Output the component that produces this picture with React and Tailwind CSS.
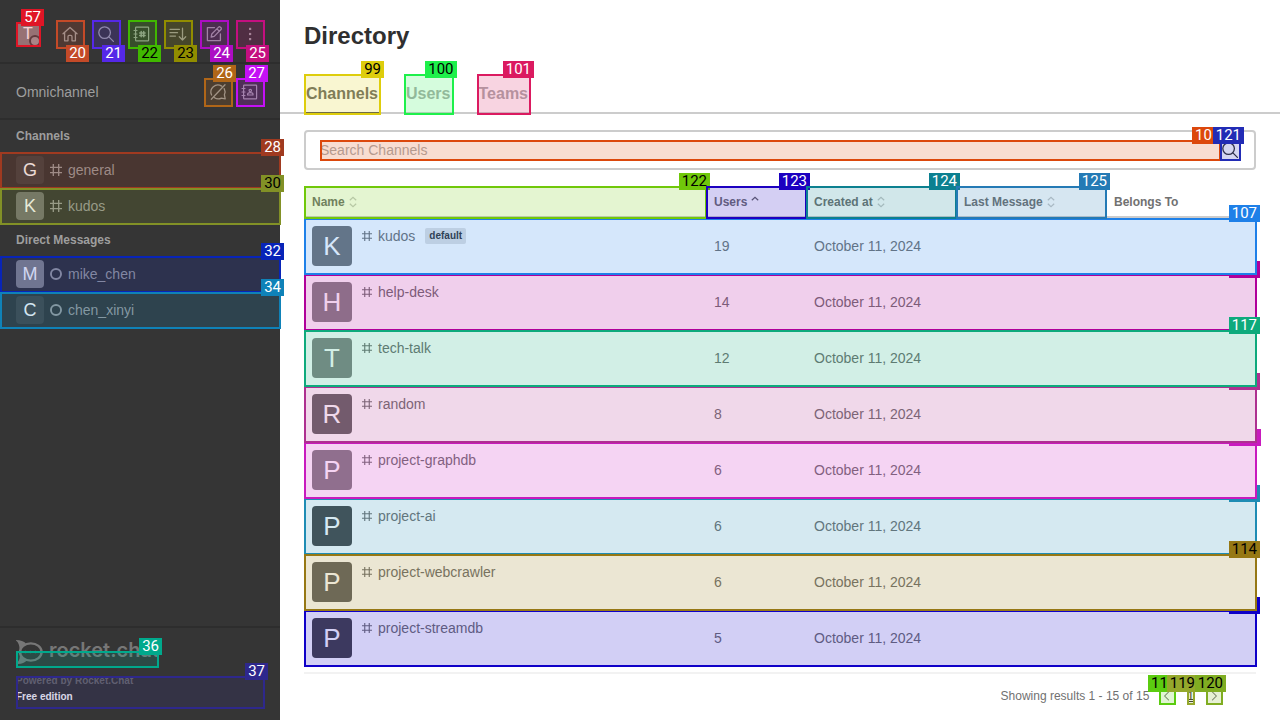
import React from 'react';

/* Numbered highlight laid over its (relative) parent. The colour comes from the text colour. */
function Mark({ n, color, dark, below, box = 'left-0 top-0 -right-px -bottom-px', z = 'z-10', label = '' }) {
  return (
    <span className={`pointer-events-none absolute border-2 border-current bg-current/19 ${box} ${z} ${color}`}>
      <span
        className={`absolute block h-[17px] whitespace-nowrap bg-current px-[3px] font-[Roboto,sans-serif] text-[15px] leading-[17px] font-normal ${
          below ? '-right-1.5 top-[23px]' : '-right-[5px] bottom-full -mb-0.5'
        } ${label}`}
      >
        <span className={dark ? 'text-black' : 'text-white'}>{n}</span>
      </span>
    </span>
  );
}

function Svg({ children, className = 'size-5', w = 1.3 }) {
  return (
    <svg viewBox="0 0 20 20" className={`shrink-0 ${className}`} fill="none" stroke="currentColor" strokeWidth={w} strokeLinecap="round" strokeLinejoin="round" aria-hidden="true">
      {children}
    </svg>
  );
}

const Home = () => (
  <Svg>
    <path d="M3 9.8 10 3.4l7 6.4M4.6 8.8v8H8v-4.3a1.2 1.2 0 0 1 1.2-1.2h1.6a1.2 1.2 0 0 1 1.2 1.2v4.3h3.4v-8" />
  </Svg>
);
const Search = () => (
  <Svg>
    <circle cx="8.6" cy="8.6" r="5.8" />
    <path d="m12.9 12.9 4.5 4.5" />
  </Svg>
);
const Directory = () => (
  <Svg w={1.2}>
    <rect x="3.6" y="3.2" width="13" height="13.6" rx="0.6" />
    <path d="M2 6.5h3M2 10h3M2 13.5h3" />
    <path strokeWidth="1.5" d="M9.2 7.4v5.4M11.7 7.4v5.4M7.7 8.9h5.4M7.7 11.4h5.4" />
  </Svg>
);
const Sort = () => (
  <Svg>
    <path d="M2 5.3h9.500M2 8.700h7.500M2 12.100h5.500M14.500 4.200V16M11.300 12.800l3.200 3.300 3.200-3.300" />
  </Svg>
);
const Edit = () => (
  <Svg>
    <path d="M10.5 3.6H3.4v13h13V9.8" />
    <path d="m7.2 13 .6-3 6.8-6.9a1.2 1.2 0 0 1 1.7 0l.7.7a1.2 1.2 0 0 1 0 1.7l-6.8 6.9zM13 4.9l2.3 2.3" />
  </Svg>
);
const Kebab = () => (
  <Svg>
    <g fill="currentColor" stroke="none">
      <rect x="9" y="3.8" width="2.2" height="2.2" />
      <rect x="9" y="8.9" width="2.2" height="2.2" />
      <rect x="9" y="14" width="2.2" height="2.2" />
    </g>
  </Svg>
);
const ChatOff = () => (
  <Svg>
    <path d="M13.7 4.1A7 7 0 0 0 3.6 13M16.2 6.6a7 7 0 0 1 .2 6.2l.8 4-3.8-.7a7 7 0 0 1-6.9-.4M17 2.8 3.3 17.2" />
  </Svg>
);
const Contacts = () => (
  <Svg w={1.2}>
    <rect x="3.6" y="3.2" width="13" height="13.6" rx="0.6" />
    <path d="M2 6.5h3M2 10h3M2 13.5h3M7.6 13H13v-.8c0-1-1-1.6-2.7-1.6s-2.7.6-2.7 1.6z" />
    <circle cx="10.3" cy="8.6" r="1.2" />
  </Svg>
);
const Hash = ({ className }) => (
  <Svg className={className} w={2.2}>
    <path d="M5.500 0v20M14.500 0v20M0 5.500h20M0 14.500h20" strokeLinecap="butt" />
  </Svg>
);
const Ring = ({ className }) => (
  <Svg className={className} w={3.2}>
    <circle cx="10" cy="10" r="8.4" />
  </Svg>
);
const SortMark = ({ up = 'text-[#c8c8c8]', down = 'text-[#c8c8c8]' }) => (
  <svg viewBox="0 0 16 16" className="size-4" fill="none" stroke="currentColor" strokeWidth="1.200" aria-hidden="true">
    <path className={up} d="m4.800 6.200 3.200-3 3.200 3" />
    <path className={down} d="m4.800 9.800 3.200 3 3.200-3" />
  </svg>
);

const nav = [
  { n: 20, label: 'Home', icon: <Home />, color: 'text-[#c44a28]' },
  { n: 21, label: 'Search', icon: <Search />, color: 'text-[#5528e8]' },
  { n: 22, label: 'Directory', icon: <Directory />, color: 'text-[#40b800]', dark: true },
  { n: 23, label: 'Display', icon: <Sort />, color: 'text-[#918d00]', dark: true },
  { n: 24, label: 'Create new', icon: <Edit />, color: 'text-[#ad0dc4]' },
  { n: 25, label: 'More', icon: <Kebab />, color: 'text-[#c40f80]' },
];

const rooms = [
  {
    title: 'Channels',
    items: [
      { n: 28, name: 'general', bg: 'bg-[#434343]', color: 'text-[#a03a20]' },
      { n: 30, name: 'kudos', bg: 'bg-[#747474]', color: 'text-[#829126]', dark: true },
    ],
  },
  {
    title: 'Direct Messages',
    direct: true,
    items: [
      { n: 32, name: 'mike_chen', bg: 'bg-[#888888]', color: 'text-[#0824b8]' },
      { n: 34, name: 'chen_xinyi', bg: 'bg-[#454545]', color: 'text-[#0f82b8]' },
    ],
  },
];

const tabs = [
  { n: 99, name: 'Channels', active: true, color: 'text-[#decd0c]', dark: true },
  { n: 100, name: 'Users', color: 'text-[#1ef04b]', dark: true },
  { n: 101, name: 'Teams', color: 'text-[#db1a60]' },
];

const columns = [
  { n: 122, name: 'Name', color: 'text-[#70c80a]', dark: true, width: '' },
  { n: 123, name: 'Users', color: 'text-[#1c00c0]', width: 'w-[100px]', up: 'text-[#666666]' },
  { n: 124, name: 'Created at', color: 'text-[#0c8090]', width: 'w-[150px]' },
  { n: 125, name: 'Last Message', color: 'text-[#247ab5]', width: 'w-[150px]' },
];

const channels = [
  { n: 107, name: 'kudos', tag: 'default', users: 19, bg: 'bg-[#737373]', color: 'text-[#1e80e8]', z: 'z-7' },
  { name: 'help-desk', users: 14, bg: 'bg-[#868686]', color: 'text-[#b0009a]', z: 'z-5' },
  { n: 117, name: 'tech-talk', users: 12, bg: 'bg-[#868686]', color: 'text-[#0eaa7c]', z: 'z-6' },
  { name: 'random', users: 8, bg: 'bg-[#666666]', color: 'text-[#ae3090]', z: 'z-4' },
  { name: 'project-graphdb', users: 6, bg: 'bg-[#838383]', color: 'text-[#c81abe]', z: 'z-3', wide: true },
  { name: 'project-ai', users: 6, bg: 'bg-[#484848]', color: 'text-[#1e8cb4]', z: 'z-1' },
  { n: 114, name: 'project-webcrawler', users: 6, bg: 'bg-[#656565]', color: 'text-[#967814]', z: 'z-2', dark: true },
  { name: 'project-streamdb', users: 5, bg: 'bg-[#464646]', color: 'text-[#0f00c8]', z: 'z-0' },
];

function Sidebar() {
  return (
    <aside className="relative z-20 flex w-[280px] shrink-0 flex-col bg-[#353535] text-sm text-[#9e9e9e]">
      <header className="flex items-center justify-between border-b-2 border-[#2d2d2d] pt-5 pr-4 pb-3.5 pl-4">
        <button aria-label="User menu" className="relative flex size-6 items-center justify-center rounded-xs bg-[#878787] text-base text-white">
          T
          <span className="absolute -right-px -bottom-px size-3 rounded-full border-2 border-[#454545] bg-[#9e9e9e]" />
          <Mark n={57} color="text-[#e01526]" />
        </button>
        <nav className="flex gap-2">
          {nav.map((b) => (
            <button key={b.n} aria-label={b.label} className="relative flex size-7 items-center justify-center">
              {b.icon}
              <Mark n={b.n} color={b.color} dark={b.dark} below />
            </button>
          ))}
        </nav>
      </header>
      <section className="flex h-14 items-center border-b-2 border-[#2d2d2d] px-4 pt-0.5">
        <h2 className="flex-1">Omnichannel</h2>
        <div className="flex gap-1">
          <button aria-label="Turn on answer chats" className="relative flex size-7 items-center justify-center">
            <ChatOff />
            <Mark n={26} color="text-[#b06618]" />
          </button>
          <button aria-label="Contact center" className="relative flex size-7 items-center justify-center">
            <Contacts />
            <Mark n={27} color="text-[#c410f5]" />
          </button>
        </div>
      </section>
      {rooms.map((g) => (
        <section key={g.title}>
          <h3 className="flex h-8 items-center px-4 text-xs font-bold">{g.title}</h3>
          <ul>
            {g.items.map((r) => (
              <li key={r.n}>
                <a href={`#${r.name}`} className="relative flex h-9 items-center px-4">
                  <span className={`flex size-7 items-center justify-center rounded-sm text-lg text-white ${r.bg}`}>
                    {r.name[0].toUpperCase()}
                  </span>
                  {g.direct ? <Ring className="ml-1.5 size-3" /> : <Hash className="ml-1.5 size-3" />}
                  <span className="ml-1.5">{r.name}</span>
                  <Mark n={r.n} color={r.color} dark={r.dark} />
                </a>
              </li>
            ))}
          </ul>
        </section>
      ))}
      <footer className="mt-auto border-t-2 border-[#2d2d2d] px-4 pt-3 pb-[15px]">
        <a href="#home" className="relative flex h-[27px] w-[142px] items-start gap-1.5 text-[#777777]">
          <svg viewBox="0 0 27 24" className="h-6 w-[27px] shrink-0" fill="none" stroke="currentColor" strokeWidth="2.4" aria-hidden="true">
            <path fill="currentColor" stroke="none" d="M0 0c4.500 0 8 1.200 10 3.500L3.500 9C3.600 5.500 2.400 2.500 0 .5zM0 24c4.800.200 8.500-.900 10.500-3.200L3.800 15.500C4 19 2.600 22 0 23.500z" />
            <ellipse cx="14.800" cy="12" rx="10.800" ry="8.600" />
            <path strokeLinecap="round" strokeWidth="2.600" d="M9.500 12h.01M14.500 12h.01M19.500 12h.01" />
          </svg>
          <span className="font-[Inter,sans-serif] text-xl leading-5 font-semibold">rocket.chat</span>
          <Mark n={36} color="text-[#00a98c]" box="left-0 top-[11px] -right-px -bottom-px" />
        </a>
        <div className="relative mt-1.5 h-8 text-[10px] leading-4 font-bold">
          <p className="text-[#6c6c6c]">Powered by Rocket.Chat</p>
          <p className="text-white">Free edition</p>
          <Mark n={37} color="text-[#2e288c]" box="left-0 top-[3px] -right-px -bottom-1" />
        </div>
      </footer>
    </aside>
  );
}

export default function App() {
  return (
    <div className="flex min-h-screen bg-white font-['Liberation_Sans',Arial,sans-serif]">
      <Sidebar />
      <main className="flex min-w-0 flex-1 flex-col text-sm text-[#717171]">
        <h1 className="px-6 pt-5 text-2xl leading-8 font-bold text-[#2f2f2f]">Directory</h1>
        <div role="tablist" className="mt-[22px] flex gap-6 border-b-2 border-[#cccccc] px-6">
          {tabs.map((t) => (
            <button
              key={t.n}
              role="tab"
              aria-selected={!!t.active}
              className={`relative -mb-0.5 h-10 border-b-2 px-0.5 pt-0.5 text-base font-bold ${
                t.active ? 'border-b-[#555555] text-[#6a6a6a]' : 'border-b-transparent text-[#adadad]'
              }`}
            >
              {t.name}
              <Mark n={t.n} color={t.color} dark={t.dark} box="left-0 top-0 -right-px -bottom-[3px]" />
            </button>
          ))}
        </div>
        <div className="flex flex-1 flex-col px-6 pt-4">
          <div className="flex h-10 items-center rounded-sm border-2 border-[#cccccc] px-3.5">
            <div className="relative flex h-5 flex-1">
              <input aria-label="Search Channels" placeholder="Search Channels" className="h-5 w-full bg-transparent leading-5 outline-none placeholder:text-[#adadad]" />
              <Mark n="10" color="text-[#dc480c]" label="w-8" />
            </div>
            <button aria-label="Search" className="relative size-5 text-[#333333]">
              <Search />
              <Mark n={121} color="text-[#222cb5]" />
            </button>
          </div>
          <table className="mt-4 w-full table-fixed border-separate border-spacing-0 text-left">
            <thead>
              <tr className="h-8 text-xs">
                {columns.map((c) => (
                  <th key={c.n} className={`relative border-b-2 border-[#cccccc] px-2 pt-0.5 font-bold ${c.width}`}>
                    <button className="flex items-center">
                      {c.name}
                      <SortMark up={c.up} down={c.up ? 'text-transparent' : undefined} />
                    </button>
                    <Mark n={c.n} color={c.color} dark={c.dark} box="left-0 top-0 -right-px -bottom-[3px]" />
                  </th>
                ))}
                <th className="w-[150px] border-b-2 border-[#cccccc] px-2 pt-0.5 font-bold">Belongs To</th>
              </tr>
            </thead>
            <tbody>
              {channels.map((c) => (
                <tr key={c.name} className={`relative h-14 bg-white ${c.z}`}>
                  <td className="px-2">
                    <div className="flex h-10">
                      <span className={`flex size-10 items-center justify-center rounded-sm pt-0.5 text-[26px] text-white ${c.bg}`}>
                        {c.name[0].toUpperCase()}
                      </span>
                      <div className="ml-2.5 flex h-5 items-center">
                        <Hash className="size-2.5" />
                        <span className="ml-1.5">{c.name}</span>
                        {c.tag && (
                          <span className="ml-2.5 rounded-xs bg-[#e2e2e2] px-1 text-[10px] leading-4 font-bold text-[#333333]">{c.tag}</span>
                        )}
                      </div>
                    </div>
                    <Mark n={c.n} color={c.color} dark={c.dark} label={c.n ? '' : c.wide ? 'w-8 translate-x-px' : 'w-[31px]'} />
                  </td>
                  <td className="px-2">{c.users}</td>
                  <td className="px-2">October 11, 2024</td>
                  <td />
                  <td />
                </tr>
              ))}
            </tbody>
          </table>
          <div className="mt-1.5 flex items-center justify-end border-t-2 border-[#f2f2f2] pt-3.5 pr-[34px] text-xs leading-4">
            <span className="mr-2.5">Showing results 1 - 15 of 15</span>
            <button aria-label="Previous page" className="relative size-4">
              <Svg className="size-4"><path d="m12 5-5 5 5 5" /></Svg>
              <Mark n={118} color="text-[#5bcc10]" dark />
            </button>
            <a href="#1" className="relative ml-3 text-[#333333] underline">
              1
              <Mark n={119} color="text-[#95a82c]" dark />
            </a>
            <button aria-label="Next page" className="relative ml-3 size-4">
              <Svg className="size-4"><path d="m8 5 5 5-5 5" /></Svg>
              <Mark n={120} color="text-[#80ad22]" dark />
            </button>
          </div>
        </div>
      </main>
    </div>
  );
}
